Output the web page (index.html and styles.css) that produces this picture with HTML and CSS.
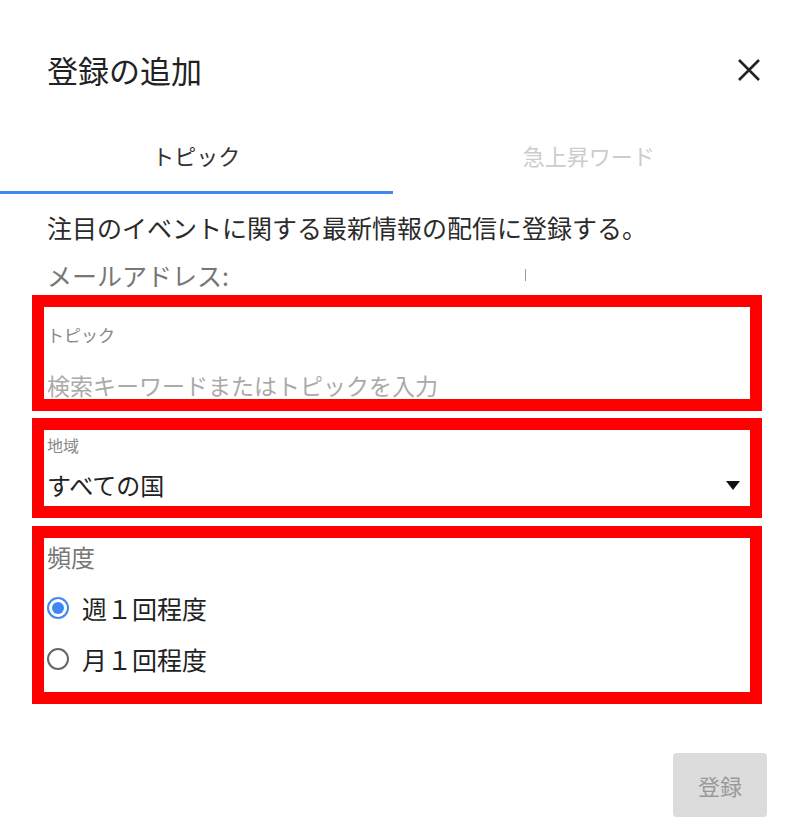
FILE: index.html
```html
<!DOCTYPE html>
<html lang="ja">
<head>
    <meta charset="UTF-8">
    <meta name="viewport" content="width=device-width, initial-scale=1.0">
    <title>登録の追加</title>
<link rel="stylesheet" href="styles.css">
</head>
<body>
    <div class="dialog">
        <div class="header">
            <h1>登録の追加</h1>
            <button class="close" aria-label="閉じる">
                <svg width="24" height="24" viewBox="0 0 24 24">
                    <path d="M2 2 L22 22 M22 2 L2 22" stroke="#222" stroke-width="2.6" fill="none"/>
                </svg>
            </button>
        </div>

        <div class="tabs">
            <div class="tab active">トピック</div>
            <div class="tab">急上昇ワード</div>
        </div>

        <p class="desc">注目のイベントに関する最新情報の配信に登録する。</p>
        <div class="email">
            <span>メールアドレス:</span>
            <span class="caret"></span>
        </div>

        <div class="field topic">
            <div class="label">トピック</div>
            <div class="placeholder">検索キーワードまたはトピックを入力</div>
        </div>

        <div class="field region">
            <div class="label">地域</div>
            <div class="select">
                <span>すべての国</span>
                <span class="arrow"></span>
            </div>
        </div>

        <div class="field freq">
            <div class="freq-title">頻度</div>
            <label class="radio-row">
                <span class="radio checked"></span>
                <span>週１回程度</span>
            </label>
            <label class="radio-row">
                <span class="radio"></span>
                <span>月１回程度</span>
            </label>
        </div>

        <div class="footer">
            <button class="submit" disabled>登録</button>
        </div>
    </div>
</body>
</html>
```

FILE: styles.css
```css
body {
    margin: 0;
    background: #fff;
    font-family: "Noto Sans CJK JP", "Noto Sans", sans-serif;
    color: #222;
}

.dialog {
    width: 785px;
    height: 836px;
}

.header {
    box-sizing: border-box;
    height: 116px;
    padding: 48px 24px 0 47px;
    display: flex;
    justify-content: space-between;
    align-items: flex-start;
}

.header h1 {
    margin: 0;
    font-size: 31px;
    font-weight: normal;
    line-height: 44px;
    color: #222;
}

.close {
    margin-top: 10px;
    padding: 0;
    border: none;
    background: none;
    width: 24px;
    height: 24px;
}

.tabs {
    display: flex;
}

.tab {
    width: 395px;
    text-align: center;
    font-size: 22px;
    line-height: 30px;
    padding: 24px 0 21px;
    border-bottom: 3px solid transparent;
    color: #ccc;
}

.tab.active {
    color: #333;
    border-bottom-color: #4285f4;
}

.desc {
    margin: 17px 0 0 47px;
    font-size: 25px;
    line-height: 32px;
    color: #2a2a2a;
}

.email {
    margin: 16px 0 0 47px;
    font-size: 25px;
    line-height: 32px;
    color: #777;
    display: flex;
    align-items: center;
}

.caret {
    width: 1px;
    height: 12px;
    background: #999;
    margin-left: 296px;
}

.field {
    box-sizing: border-box;
    width: 730px;
    margin-left: 32px;
    border: 12px solid #ff0000;
    padding: 0 3px;
}

.topic {
    margin-top: 4px;
    height: 116px;
    padding-top: 17px;
}

.topic .label {
    font-size: 17px;
    line-height: 22px;
    color: #888;
}

.placeholder {
    margin-top: 25px;
    font-size: 23px;
    line-height: 28px;
    color: #aaa;
}

.region {
    margin-top: 7px;
    height: 100px;
    padding-top: 5px;
}

.region .label {
    font-size: 16px;
    line-height: 20px;
    color: #888;
}

.select {
    margin-top: 15px;
    display: flex;
    justify-content: space-between;
    align-items: center;
    font-size: 24px;
    line-height: 30px;
    color: #222;
    padding-right: 7px;
}

.arrow {
    width: 0;
    height: 0;
    border-left: 7px solid transparent;
    border-right: 7px solid transparent;
    border-top: 9px solid #111;
}

.freq {
    margin-top: 8px;
    height: 178px;
    padding-top: 4px;
}

.freq-title {
    font-size: 24px;
    line-height: 30px;
    color: #777;
}

.radio-row {
    display: flex;
    align-items: center;
    height: 36px;
    margin-top: 15px;
    font-size: 25px;
    color: #222;
}

.radio-row:first-of-type {
    margin-top: 18px;
}

.radio {
    box-sizing: border-box;
    width: 22px;
    height: 22px;
    border: 2px solid #666;
    border-radius: 50%;
    margin-right: 13px;
    display: flex;
    align-items: center;
    justify-content: center;
}

.radio.checked {
    border-color: #4285f4;
}

.radio.checked::after {
    content: "";
    width: 12px;
    height: 12px;
    border-radius: 50%;
    background: #4285f4;
}

.footer {
    display: flex;
    justify-content: flex-end;
    padding: 49px 18px 0 0;
}

.submit {
    width: 94px;
    height: 64px;
    border: none;
    border-radius: 4px;
    background: #dcdcdc;
    color: #999;
    font-family: inherit;
    font-size: 22px;
}
```
